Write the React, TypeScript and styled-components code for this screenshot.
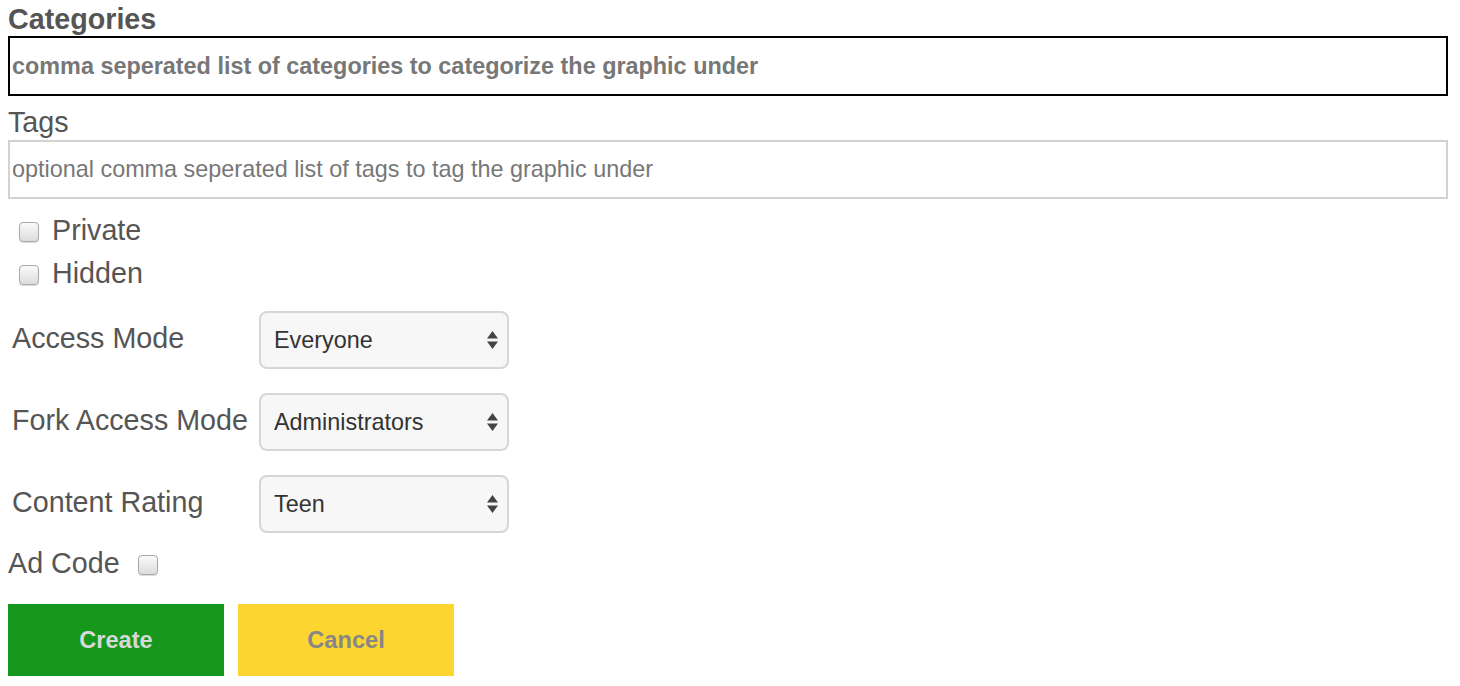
import React from "react"
import styled, { createGlobalStyle } from "styled-components"

const GlobalStyle = createGlobalStyle`
  body {
    margin: 0;
    background: #fff;
    font-family: "Liberation Sans", Arial, sans-serif;
    color: #555;
  }
`

const Form = styled.form`
  display: flex;
  flex-direction: column;
  padding: 3px 12px 0 8px;
`

const FieldLabel = styled.label<{ $bold?: boolean }>`
  display: block;
  font-size: 28.7px;
  line-height: 32px;
  font-weight: ${(p) => (p.$bold ? 700 : 400)};
  margin-bottom: ${(p) => (p.$bold ? "1px" : "2px")};
`

const TextInput = styled.input<{ $active?: boolean }>`
  box-sizing: border-box;
  width: 100%;
  height: ${(p) => (p.$active ? "60px" : "59px")};
  margin: 0 0 10px;
  padding: 0 2px;
  border: 2px solid ${(p) => (p.$active ? "#000" : "#d2d2d2")};
  border-radius: 0;
  background: #fff;
  font-family: inherit;
  font-size: 23.4px;
  font-weight: ${(p) => (p.$active ? 700 : 400)};
  color: #555;
  outline: none;

  &::placeholder {
    color: #777;
    opacity: 1;
  }
`

const CheckList = styled.div`
  display: flex;
  flex-direction: column;
  margin-top: -1px;
  padding-left: 11px;
`

const CheckRow = styled.label`
  display: flex;
  align-items: center;
  gap: 13px;
  height: 43px;
  font-size: 28.7px;
  line-height: 32px;
`

const Box = styled.input.attrs({ type: "checkbox" })`
  appearance: none;
  box-sizing: border-box;
  width: 20px;
  height: 20px;
  margin: 4px 0 0;
  border: 1px solid #a9a9a9;
  border-radius: 4px;
  background: linear-gradient(#fafafa, #dcdcdc);
  box-shadow: 0 1px 1px rgba(0, 0, 0, 0.15);
`

const SelectList = styled.div`
  display: flex;
  flex-direction: column;
  gap: 24px;
  margin-top: 17px;
`

const SelectRow = styled.div`
  display: grid;
  grid-template-columns: 247px 250px;
  align-items: center;
  padding-left: 4px;
`

const RowLabel = styled.label`
  font-size: 28.7px;
  line-height: 32px;
  white-space: nowrap;
  margin-top: -4px;
`

const SelectWrap = styled.div`
  position: relative;
  height: 58px;
`

const Select = styled.select`
  appearance: none;
  box-sizing: border-box;
  width: 100%;
  height: 100%;
  padding: 0 30px 0 13px;
  border: 2px solid #d6d6d6;
  border-radius: 8px;
  background: #f7f7f7;
  font-family: inherit;
  font-size: 23.4px;
  color: #333;
  outline: none;
`

const Arrows = styled.svg`
  position: absolute;
  right: 11px;
  top: 50%;
  transform: translateY(-50%);
  pointer-events: none;
`

const AdRow = styled.label`
  display: flex;
  align-items: center;
  gap: 18px;
  margin-top: 14px;
  height: 32px;
  font-size: 28.7px;
  line-height: 32px;
`

const Buttons = styled.div`
  display: flex;
  gap: 14px;
  margin-top: 25px;
`

const Button = styled.button<{ $variant: "create" | "cancel" }>`
  width: 216px;
  height: 72px;
  border: none;
  border-radius: 0;
  font-family: inherit;
  font-size: 23.6px;
  font-weight: 700;
  background: ${(p) => (p.$variant === "create" ? "#15981b" : "#fdd531")};
  color: ${(p) => (p.$variant === "create" ? "#d8d8d8" : "#878787")};
  cursor: pointer;
`

const selects = [
  { label: "Access Mode", value: "Everyone", options: ["Everyone", "Members", "Administrators"] },
  { label: "Fork Access Mode", value: "Administrators", options: ["Everyone", "Members", "Administrators"] },
  { label: "Content Rating", value: "Teen", options: ["Everyone", "Teen", "Mature"] },
]

const App = () => {
  return (
    <>
      <GlobalStyle />
      <Form onSubmit={(e) => e.preventDefault()}>
        <FieldLabel $bold>Categories</FieldLabel>
        <TextInput $active placeholder="comma seperated list of categories to categorize the graphic under" />
        <FieldLabel>Tags</FieldLabel>
        <TextInput placeholder="optional comma seperated list of tags to tag the graphic under" />

        <CheckList>
          <CheckRow>
            <Box />
            Private
          </CheckRow>
          <CheckRow>
            <Box />
            Hidden
          </CheckRow>
        </CheckList>

        <SelectList>
          {selects.map((s) => (
            <SelectRow key={s.label}>
              <RowLabel>{s.label}</RowLabel>
              <SelectWrap>
                <Select defaultValue={s.value}>
                  {s.options.map((o) => (
                    <option key={o}>{o}</option>
                  ))}
                </Select>
                <Arrows width="11" height="18" viewBox="0 0 11 18">
                  <path d="M5.5 0 L11 7.5 H0 Z" fill="#444" />
                  <path d="M5.5 18 L11 10.5 H0 Z" fill="#444" />
                </Arrows>
              </SelectWrap>
            </SelectRow>
          ))}
        </SelectList>

        <AdRow>
          Ad Code
          <Box />
        </AdRow>

        <Buttons>
          <Button type="submit" $variant="create">Create</Button>
          <Button type="button" $variant="cancel">Cancel</Button>
        </Buttons>
      </Form>
    </>
  )
}

export default App
